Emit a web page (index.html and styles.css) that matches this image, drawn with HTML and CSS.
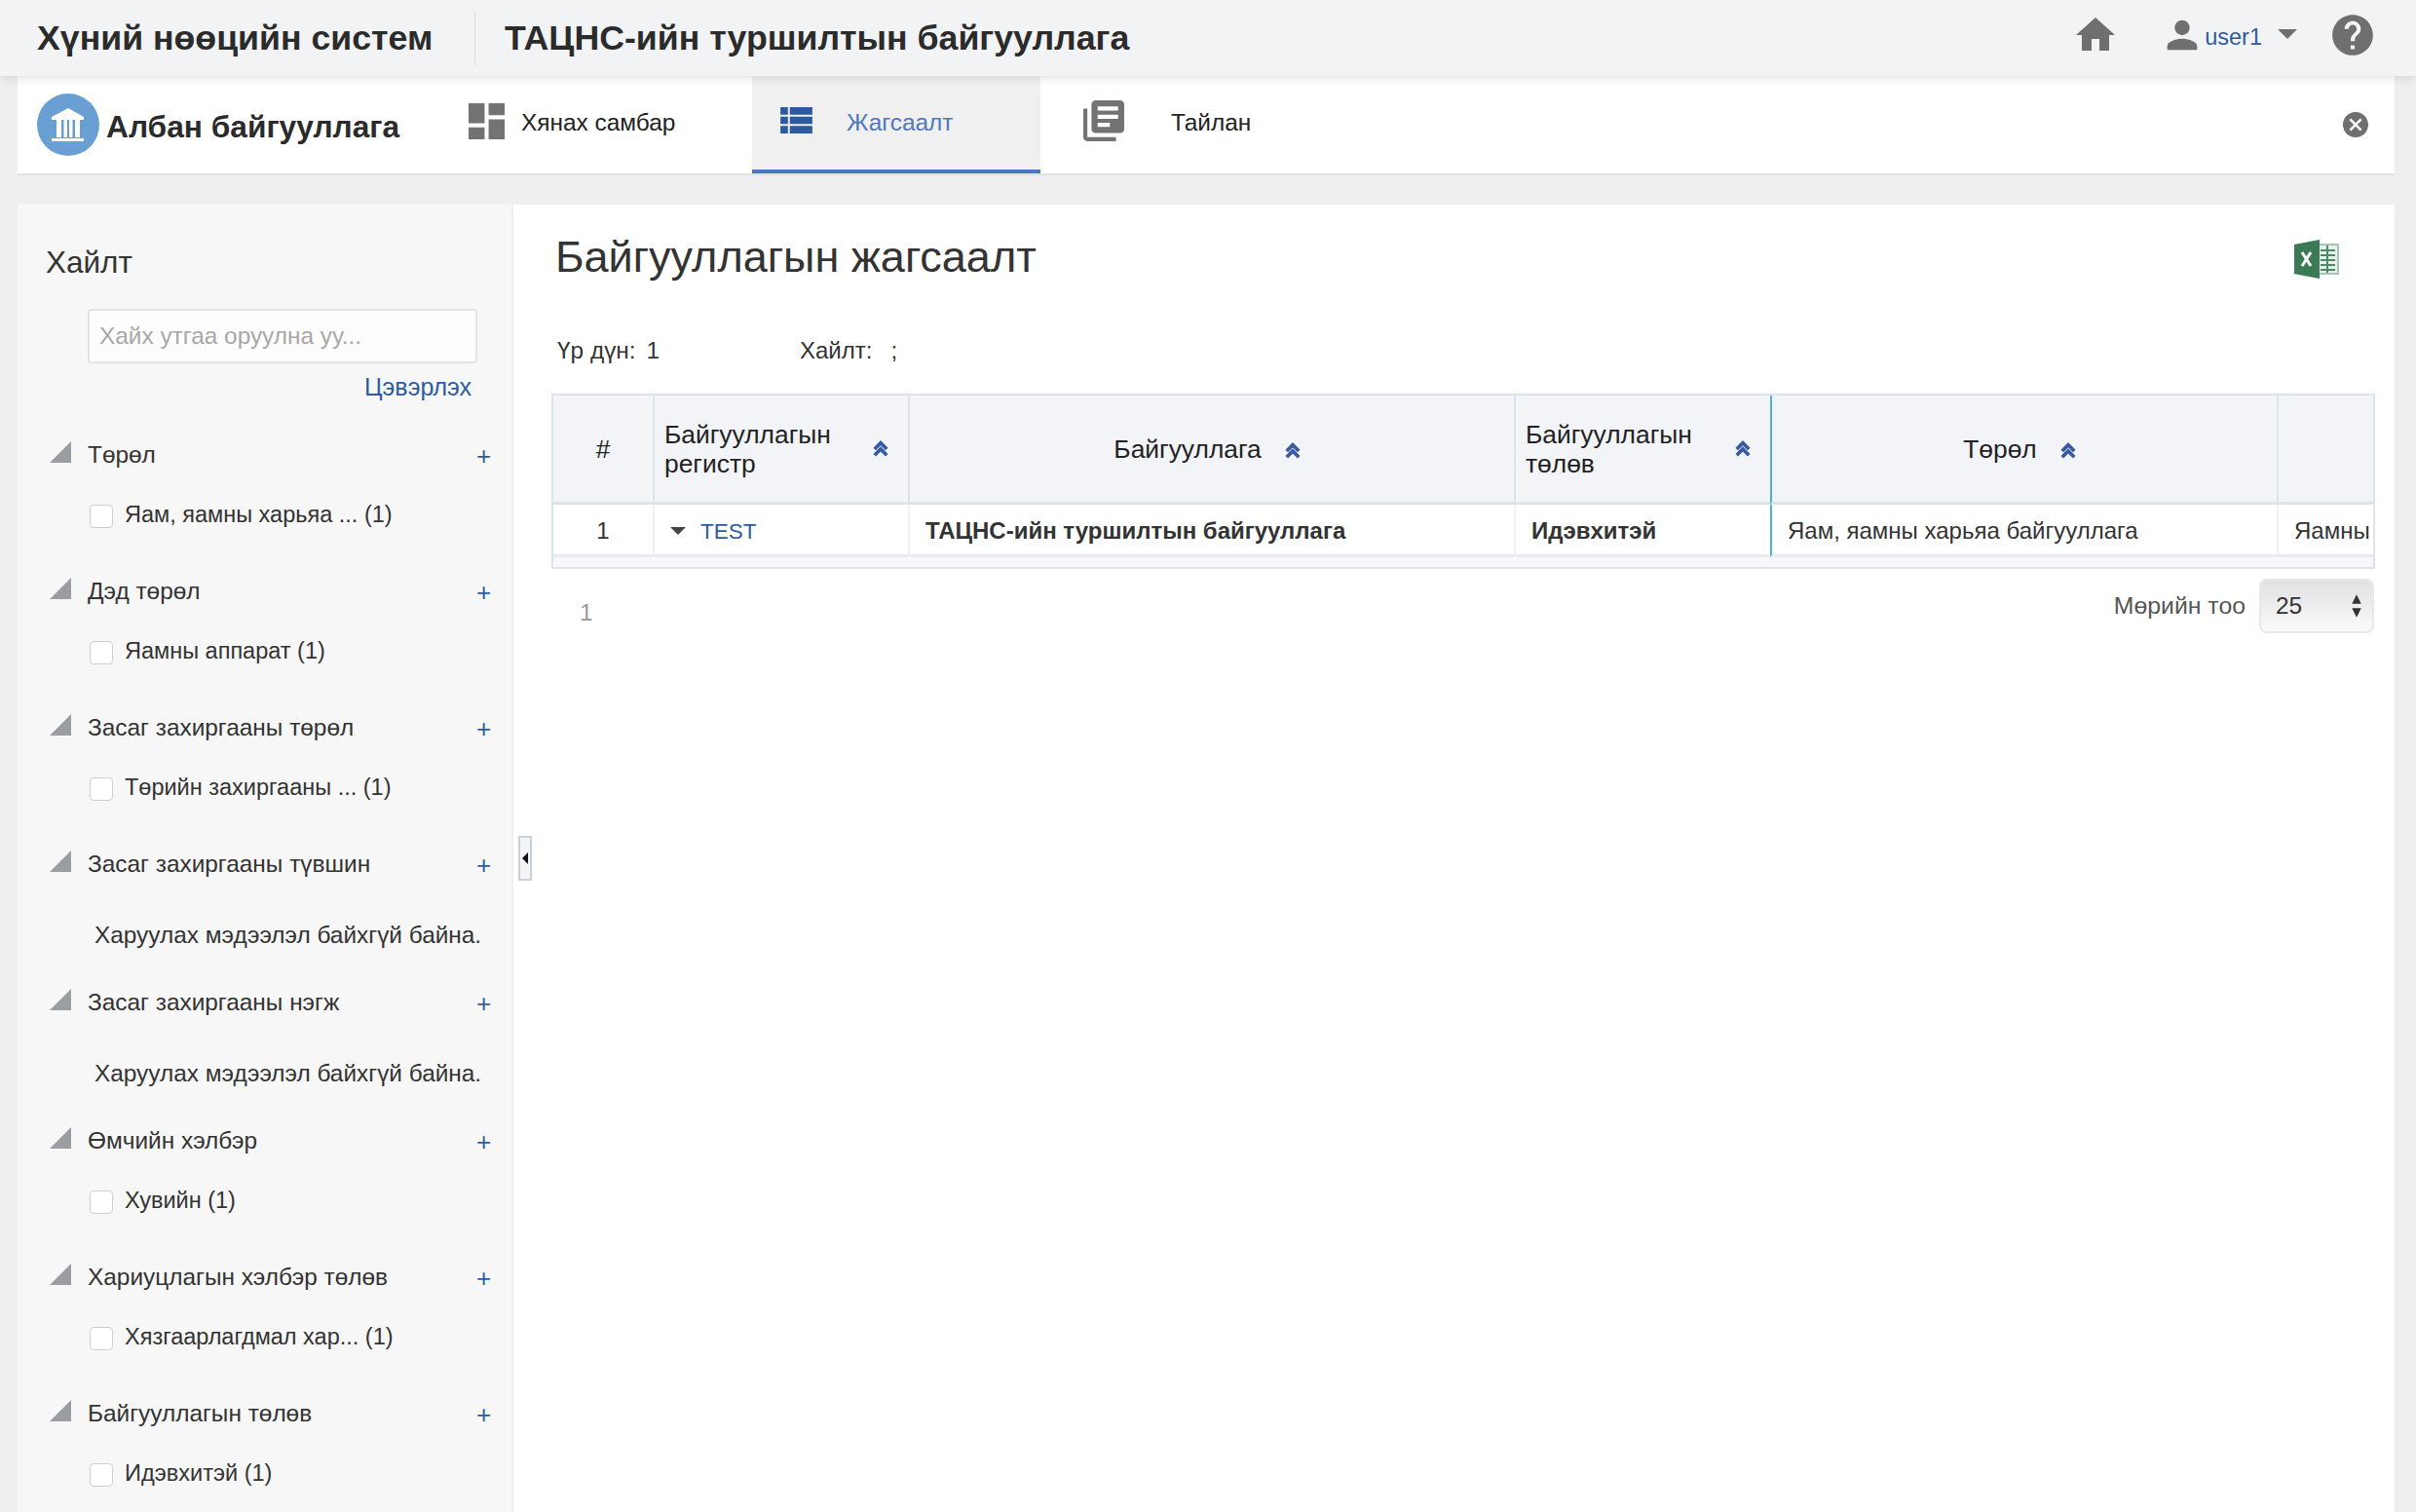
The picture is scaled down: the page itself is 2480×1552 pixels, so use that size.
FILE: index.html
```html
<!DOCTYPE html>
<html lang="mn">
<head>
    <meta charset="UTF-8">
    <title>Байгууллагын жагсаалт</title>
    <link rel="stylesheet" href="styles.css">
</head>
<body>
    <header class="topbar">
        <div class="app-name">Хүний нөөцийн систем</div>
        <div class="org-name">ТАЦНС-ийн туршилтын байгууллага</div>
        <div class="top-actions">
            <svg class="icon-home" viewBox="0 0 24 24"><path d="M10 20v-6h4v6h5v-8h3L12 3 2 12h3v8z"/></svg>
            <svg class="icon-user" viewBox="0 0 24 24"><path d="M12 12c2.21 0 4-1.79 4-4s-1.79-4-4-4-4 1.79-4 4 1.79 4 4 4zm0 2c-2.67 0-8 1.34-8 4v2h16v-2c0-2.66-5.33-4-8-4z"/></svg>
            <a class="user-link" href="#">user1</a>
            <span class="user-caret"></span>
            <svg class="icon-help" viewBox="0 0 24 24"><path d="M12 2C6.48 2 2 6.48 2 12s4.48 10 10 10 10-4.48 10-10S17.52 2 12 2zm1 17h-2v-2h2v2zm2.07-7.75l-.9.92C13.45 12.9 13 13.5 13 15h-2v-.5c0-1.1.45-2.1 1.17-2.83l1.24-1.26c.37-.36.59-.86.59-1.41 0-1.1-.9-2-2-2s-2 .9-2 2H8c0-2.21 1.79-4 4-4s4 1.79 4 4c0 .88-.36 1.68-.93 2.25z"/></svg>
        </div>
    </header>

    <nav class="tabbar">
        <div class="brand">
            <svg class="brand-logo" viewBox="0 0 64 64">
                <circle cx="32" cy="32" r="32" fill="#6a9fd4"/>
                <path d="M32 15 L48 24 V27 H15 V24 Z" fill="#fff"/>
                <rect x="20" y="27" width="5" height="18" fill="#fff"/>
                <rect x="27.5" y="27" width="3.5" height="18" fill="#fff"/>
                <rect x="33" y="27" width="3.5" height="18" fill="#fff"/>
                <rect x="39" y="27" width="5" height="18" fill="#fff"/>
                <rect x="15" y="46" width="33" height="3" fill="#fff"/>
            </svg>
            <span class="brand-name">Албан байгууллага</span>
        </div>
        <a class="tab tab-dashboard" href="#">
            <svg class="tab-icon" viewBox="3 3 18 18"><path d="M3 13h8V3H3v10zm0 8h8v-6H3v6zm10 0h8V11h-8v10zm0-18v6h8V3h-8z"/></svg>
            <span>Хянах самбар</span>
        </a>
        <a class="tab tab-list active" href="#">
            <svg class="tab-icon" viewBox="4 5 17 14"><path d="M4 14h4v-4H4v4zm0 5h4v-4H4v4zm0-10h4V5H4v4zm5 5h12v-4H9v4zm0 5h12v-4H9v4zM9 5v4h12V5H9z"/></svg>
            <span>Жагсаалт</span>
        </a>
        <a class="tab tab-report" href="#">
            <svg class="tab-icon" viewBox="2 2 20 20"><path d="M4 6H2v14c0 1.1.9 2 2 2h14v-2H4V6zm16-4H8c-1.1 0-2 .9-2 2v12c0 1.1.9 2 2 2h12c1.1 0 2-.9 2-2V4c0-1.1-.9-2-2-2zm-1 9H9V9h10v2zm-4 4H9v-2h6v2zm4-8H9V5h10v2z"/></svg>
            <span>Тайлан</span>
        </a>
        <svg class="tab-close" viewBox="2 2 20 20"><path d="M12 2C6.47 2 2 6.47 2 12s4.47 10 10 10 10-4.47 10-10S17.53 2 12 2zm5 13.59L15.59 17 12 13.41 8.41 17 7 15.59 10.59 12 7 8.41 8.41 7 12 10.59 15.59 7 17 8.41 13.41 12 17 15.59z"/></svg>
    </nav>

    <div class="layout">
        <aside class="sidebar">
            <h3 class="search-title">Хайлт</h3>
            <input class="search-input" type="text" placeholder="Хайх утгаа оруулна уу...">
            <div class="clear-row"><a href="#">Цэвэрлэх</a></div>

            <div class="group">
                <div class="group-head"><svg class="corner" viewBox="0 0 22 22"><polygon points="22,0 22,22 0,22"/></svg><span>Төрөл</span><a class="plus" href="#">+</a></div>
                <label class="check"><input type="checkbox"><span>Яам, яамны харьяа ... (1)</span></label>
            </div>
            <div class="group">
                <div class="group-head"><svg class="corner" viewBox="0 0 22 22"><polygon points="22,0 22,22 0,22"/></svg><span>Дэд төрөл</span><a class="plus" href="#">+</a></div>
                <label class="check"><input type="checkbox"><span>Яамны аппарат (1)</span></label>
            </div>
            <div class="group">
                <div class="group-head"><svg class="corner" viewBox="0 0 22 22"><polygon points="22,0 22,22 0,22"/></svg><span>Засаг захиргааны төрөл</span><a class="plus" href="#">+</a></div>
                <label class="check"><input type="checkbox"><span>Төрийн захиргааны ... (1)</span></label>
            </div>
            <div class="group group-empty">
                <div class="group-head"><svg class="corner" viewBox="0 0 22 22"><polygon points="22,0 22,22 0,22"/></svg><span>Засаг захиргааны түвшин</span><a class="plus" href="#">+</a></div>
                <p class="no-data">Харуулах мэдээлэл байхгүй байна.</p>
            </div>
            <div class="group group-empty">
                <div class="group-head"><svg class="corner" viewBox="0 0 22 22"><polygon points="22,0 22,22 0,22"/></svg><span>Засаг захиргааны нэгж</span><a class="plus" href="#">+</a></div>
                <p class="no-data">Харуулах мэдээлэл байхгүй байна.</p>
            </div>
            <div class="group">
                <div class="group-head"><svg class="corner" viewBox="0 0 22 22"><polygon points="22,0 22,22 0,22"/></svg><span>Өмчийн хэлбэр</span><a class="plus" href="#">+</a></div>
                <label class="check"><input type="checkbox"><span>Хувийн (1)</span></label>
            </div>
            <div class="group">
                <div class="group-head"><svg class="corner" viewBox="0 0 22 22"><polygon points="22,0 22,22 0,22"/></svg><span>Хариуцлагын хэлбэр төлөв</span><a class="plus" href="#">+</a></div>
                <label class="check"><input type="checkbox"><span>Хязгаарлагдмал хар... (1)</span></label>
            </div>
            <div class="group">
                <div class="group-head"><svg class="corner" viewBox="0 0 22 22"><polygon points="22,0 22,22 0,22"/></svg><span>Байгууллагын төлөв</span><a class="plus" href="#">+</a></div>
                <label class="check"><input type="checkbox"><span>Идэвхитэй (1)</span></label>
            </div>
        </aside>

        <main class="content">
            <div class="sidebar-toggle"><span></span></div>
            <div class="title-row">
                <h2>Байгууллагын жагсаалт</h2>
                <svg class="excel" viewBox="0 0 46 40">
                    <rect x="22" y="5" width="23" height="30" fill="#e9f1ec" stroke="#8fb5a0" stroke-width="1.5"/>
                    <path d="M27 11h15M27 16h15M27 21h15M27 26h15M27 31h15M34 6v28" stroke="#4d8a68" stroke-width="2"/>
                    <polygon points="0,5 26,0 26,40 0,35" fill="#3a7a55"/>
                    <path d="M8 13l9 14M17 13l-9 14" stroke="#fff" stroke-width="3" fill="none"/>
                </svg>
            </div>
            <div class="summary">
                <span class="sum-label">Үр дүн:</span><span class="sum-value">1</span>
                <span class="sum-label sum-search">Хайлт:</span><span class="sum-value">;</span>
            </div>
            <div class="table-wrap">
                <table class="grid">
                    <colgroup>
                        <col class="col-num"><col class="col-reg"><col class="col-org"><col class="col-state"><col class="col-type"><col class="col-sub">
                    </colgroup>
                    <thead>
                        <tr>
                            <th class="center">#</th>
                            <th><div class="th-split"><span>Байгууллагын<br>регистр</span><svg class="sort" viewBox="0 0 16 16"><path d="M3 8l5-5 5 5M3 13l5-5 5 5"/></svg></div></th>
                            <th class="center sortable"><span>Байгууллага</span><svg class="sort sort-inline" viewBox="0 0 16 16"><path d="M3 8l5-5 5 5M3 13l5-5 5 5"/></svg></th>
                            <th class="no-right"><div class="th-split"><span>Байгууллагын<br>төлөв</span><svg class="sort" viewBox="0 0 16 16"><path d="M3 8l5-5 5 5M3 13l5-5 5 5"/></svg></div></th>
                            <th class="center sortable mark"><span>Төрөл</span><svg class="sort sort-inline" viewBox="0 0 16 16"><path d="M3 8l5-5 5 5M3 13l5-5 5 5"/></svg></th>
                            <th></th>
                        </tr>
                    </thead>
                    <tbody>
                        <tr>
                            <td class="center">1</td>
                            <td class="reg-cell"><span class="row-caret"></span><a href="#">TEST</a></td>
                            <td class="bold">ТАЦНС-ийн туршилтын байгууллага</td>
                            <td class="bold no-right">Идэвхитэй</td>
                            <td class="mark">Яам, яамны харьяа байгууллага</td>
                            <td>Яамны</td>
                        </tr>
                    </tbody>
                </table>
                <div class="table-foot"></div>
            </div>
            <div class="pager">
                <span class="page-num">1</span>
                <span class="page-size-label">Мөрийн тоо</span>
                <div class="page-size">
                    <span>25</span>
                    <svg viewBox="0 0 10 22"><path d="M5 1l4 8H1zM5 21l-4-8h8z"/></svg>
                </div>
            </div>
        </main>
    </div>
</body>
</html>
```

FILE: styles.css
```css
html, body {
    height: 1552px;
    margin: 0;
    padding: 0;
    overflow: hidden;
}
body {
    font-family: "Liberation Sans", Arial, sans-serif;
    font-size: 24.4px;
    color: #333;
    background-color: #efefef;
}
a {
    text-decoration: none;
}
h2, h3, p {
    margin: 0;
    font-weight: normal;
}

/* top bar */
.topbar {
    position: relative;
    z-index: 2;
    display: flex;
    align-items: center;
    height: 78px;
    padding-left: 38px;
    background-color: #f2f3f5;
    box-shadow: 0 2px 10px rgba(0,0,0,0.12);
    font-weight: bold;
    color: #2b2b2b;
    font-size: 35.7px;
}
.app-name {
    width: 449px;
    line-height: 56px;
    border-right: 1px solid #dcdcdc;
}
.org-name {
    padding-left: 30px;
}
.top-actions {
    display: flex;
    align-items: center;
    margin-left: auto;
    margin-bottom: 7px;
    font-weight: normal;
    fill: #6f6f6f;
}
.icon-home {
    width: 48px;
    height: 48px;
}
.icon-user {
    width: 46px;
    height: 46px;
    margin-left: 42px;
}
.user-link {
    margin-top: 5px;
    font-size: 23.5px;
    color: #2f5c9e;
}
.user-caret {
    width: 0;
    height: 0;
    margin-left: 16px;
    margin-bottom: 2px;
    border-left: 10px solid transparent;
    border-right: 10px solid transparent;
    border-top: 10px solid #6f6f6f;
}
.icon-help {
    width: 50px;
    height: 50px;
    margin-left: 32px;
    margin-right: 40px;
}

/* tabs */
.tabbar {
    display: flex;
    align-items: stretch;
    height: 102px;
    margin: 0 22px 0 18px;
    box-sizing: border-box;
    background-color: #fff;
    border-bottom: 2px solid #dde3e8;
}
.brand {
    display: flex;
    align-items: center;
    width: 458px;
    padding-left: 20px;
    box-sizing: border-box;
}
.brand-logo {
    width: 64px;
    height: 64px;
}
.brand-name {
    margin-left: 7px;
    margin-top: 4px;
    font-size: 31.7px;
    font-weight: bold;
    color: #2b2b2b;
}
.tab {
    display: flex;
    align-items: center;
    padding-bottom: 4px;
    box-sizing: border-box;
    color: #222;
    fill: #737373;
}
.tab-dashboard {
    width: 296px;
    padding-left: 5px;
}
.tab-dashboard .tab-icon {
    width: 37px;
    height: 37px;
    margin-right: 17px;
    margin-bottom: 3px;
}
.tab-list {
    width: 296px;
    padding-left: 28px;
}
.tab-list .tab-icon {
    width: 35px;
    height: 27px;
    margin-right: 34px;
    margin-bottom: 6px;
}
.tab.active {
    color: #4f77bd;
    fill: #2d5a9c;
    background-color: #f0f0f0;
    border-bottom: 4px solid #4f77bd;
    padding-bottom: 0;
}
.tab-report {
    padding-left: 44px;
}
.tab-report .tab-icon {
    width: 42px;
    height: 42px;
    margin-right: 48px;
    margin-bottom: 4px;
}
.tab-close {
    width: 26px;
    height: 26px;
    margin-left: auto;
    margin-right: 27px;
    align-self: center;
    fill: #6f6f6f;
}

/* page layout */
.layout {
    display: flex;
    margin: 30px 22px 0 18px;
    height: 1342px;
}
.sidebar {
    width: 509px;
    padding: 37px 0 0 30px;
    box-sizing: border-box;
    background-color: #f7f7f7;
    border-right: 2px solid #eeeeee;
}
.search-title {
    margin-left: -1px;
    font-size: 31.5px;
    line-height: 44px;
    color: #333;
}
.search-input {
    display: block;
    width: 400px;
    height: 56px;
    margin: 26px 0 0 42px;
    padding: 0 10px;
    box-sizing: border-box;
    font-family: inherit;
    font-size: 24.4px;
    background-color: #fdfdfd;
    border: 2px solid #e3e4e6;
    border-radius: 3px;
}
.search-input::placeholder {
    color: #a8a8a8;
}
.clear-row {
    width: 436px;
    margin-top: 8px;
    text-align: right;
    line-height: 32px;
}
.clear-row a {
    color: #2f5c9e;
    font-size: 25px;
}
.group {
    height: 140px;
}
.group-empty {
    height: 142px;
}
.group-head {
    position: relative;
    display: flex;
    align-items: center;
    height: 40px;
    color: #333;
}
.clear-row + .group {
    margin-top: 33px;
}
.corner {
    width: 22px;
    height: 22px;
    margin: -6px 17px 0 3px;
    fill: #9a9ea3;
}
.plus {
    position: absolute;
    left: 441px;
    top: 6px;
    font-size: 26px;
    line-height: 30px;
    color: #2f5c9e;
}
.check {
    display: flex;
    align-items: center;
    height: 40px;
    margin: 21px 0 0 44px;
    font-size: 23.5px;
}
.check input {
    appearance: none;
    width: 24px;
    height: 24px;
    margin: 3px 12px 0 0;
    background-color: #fff;
    border: 1px solid #cfcfcf;
    border-radius: 4px;
}
.no-data {
    margin: 33px 0 0 49px;
    line-height: 40px;
    white-space: nowrap;
}

/* main panel */
.content {
    position: relative;
    flex: 1;
    padding: 0 19px 0 40px;
    background-color: #fff;
}
.sidebar-toggle {
    position: absolute;
    left: 5px;
    top: 648px;
    display: flex;
    align-items: center;
    justify-content: center;
    width: 14px;
    height: 46px;
    box-sizing: border-box;
    background-color: #f2f4f6;
    border: 2px solid #c9d0d8;
}
.sidebar-toggle span {
    width: 0;
    height: 0;
    border-top: 6px solid transparent;
    border-bottom: 6px solid transparent;
    border-right: 6px solid #111;
}
.title-row {
    display: flex;
    align-items: center;
    justify-content: space-between;
    height: 108px;
    padding: 0 38px 0 3px;
}
.title-row h2 {
    font-size: 45px;
}
.excel {
    width: 46px;
    height: 42px;
    margin-top: 4px;
}
.summary {
    height: 86px;
    padding: 22px 0 0 5px;
    box-sizing: border-box;
    line-height: 40px;
}
.sum-value {
    margin-left: 11px;
}
.sum-search {
    margin-left: 137px;
    font-size: 24px;
}
.summary .sum-search + .sum-value {
    margin-left: 19px;
}
.table-wrap {
    overflow: hidden;
    width: 1872px;
    margin-left: -1px;
    box-sizing: border-box;
    border: 2px solid #dde3ea;
}
.grid {
    table-layout: fixed;
    border-collapse: separate;
    border-spacing: 0;
    width: 1980px;
    font-size: 24px;
}
.col-num { width: 104px; }
.col-reg { width: 262px; }
.col-org { width: 622px; }
.col-state { width: 261px; }
.col-type { width: 522px; }
.col-sub { width: 209px; }
.grid th {
    height: 109px;
    padding: 0 10px;
    font-size: 26.4px;
    font-weight: normal;
    color: #222;
    line-height: 30px;
    text-align: left;
    background-color: #f2f4f8;
    border-right: 2px solid #dde3ea;
    border-bottom: 3px solid #dde3ea;
}
.grid td {
    height: 49px;
    padding: 2px 16px 0;
    white-space: nowrap;
    overflow: hidden;
    border-right: 2px solid #eef0f3;
    border-bottom: 3px solid #e8ebef;
}
.grid .center {
    text-align: center;
}
.grid .sortable {
    padding-right: 18px;
}
.grid .bold {
    font-weight: bold;
}
.grid .no-right {
    border-right: none;
}
.grid .mark {
    border-left: 2px solid #4bb0de;
}
.th-split {
    display: flex;
    align-items: center;
    justify-content: space-between;
    padding-right: 8px;
}
.sort {
    flex: none;
    width: 20px;
    height: 22px;
    fill: none;
    stroke: #3a5aa0;
    stroke-width: 3;
}
.sort-inline {
    margin-left: 22px;
    vertical-align: -4px;
}
.row-caret {
    display: inline-block;
    width: 0;
    height: 0;
    margin-right: 15px;
    vertical-align: 4px;
    border-left: 8px solid transparent;
    border-right: 8px solid transparent;
    border-top: 8px solid #444;
}
.reg-cell a {
    font-size: 22.5px;
    color: #2f5c9e;
}
.table-foot {
    height: 10px;
    background-color: #f6f8fb;
}
.pager {
    display: flex;
    align-items: center;
    width: 1870px;
    height: 56px;
    margin-top: 10px;
}
.page-num {
    margin-left: 28px;
    margin-top: 14px;
    color: #9a9a9a;
}
.page-size-label {
    margin-left: auto;
    font-size: 24.8px;
    color: #555;
}
.page-size {
    display: flex;
    align-items: center;
    justify-content: space-between;
    width: 118px;
    height: 56px;
    margin-left: 14px;
    padding: 0 10px 0 15px;
    box-sizing: border-box;
    background: linear-gradient(#e0e1e3, #fafafa);
    border: 2px solid #e6e8ea;
    border-radius: 8px;
}
.page-size svg {
    width: 12px;
    height: 26px;
    fill: #333;
}
```
